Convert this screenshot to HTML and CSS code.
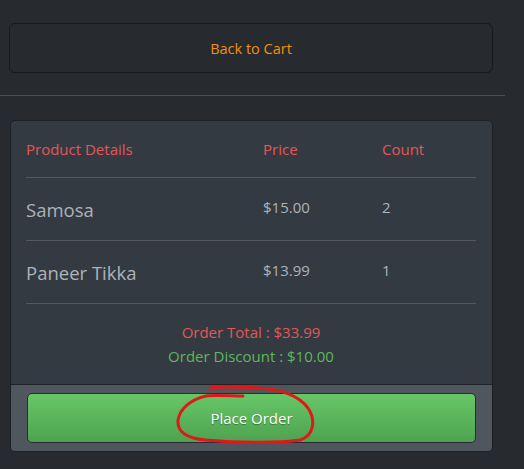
FILE: index.html
```html
<!DOCTYPE html>
<html>
<head>
<meta charset="utf-8">
<link rel="stylesheet" href="styles.css">
</head>
<body>
<div class="page">
  <div class="top">
    <button class="back-btn">Back to Cart</button>
  </div>
  <hr class="divider">
  <div class="card">
    <div class="card-body">
      <table class="cart">
        <thead>
          <tr><th class="c-name">Product Details</th><th class="c-price">Price</th><th class="c-count">Count</th></tr>
        </thead>
        <tbody>
          <tr><td class="c-name name">Samosa</td><td class="c-price">$15.00</td><td class="c-count">2</td></tr>
          <tr><td class="c-name name">Paneer Tikka</td><td class="c-price">$13.99</td><td class="c-count">1</td></tr>
        </tbody>
      </table>
      <div class="totals">
        <div class="total">Order Total : $33.99</div>
        <div class="discount">Order Discount : $10.00</div>
      </div>
    </div>
    <div class="card-footer">
      <button class="place-btn">Place Order</button>
    </div>
  </div>
</div>
<svg class="scribble" width="524" height="469" viewBox="0 0 524 469">
  <path d="M243 396 C232 396 215 395 206 396 C192 399 180 408 178 420 C177 432 186 438 205 440 C240 443 280 443 300 440 C314 436 316 420 308 408 C298 395 280 389 258 388 C240 387 222 386 210 388" fill="none" stroke="#e01818" stroke-width="3" stroke-linecap="round"/>
</svg>
</body>
</html>
```
FILE: styles.css
```css
html, body {
  margin: 0;
  padding: 0;
  background: #272a2f;
  font-family: "Open Sans", "Noto Sans", sans-serif;
}
.page {
  width: 505px;
  padding-top: 23px;
}
.top {
  padding: 0 12px 0 9px;
}
.back-btn {
  display: block;
  width: 100%;
  height: 50px;
  background: #272a2f;
  border: 1px solid #16181b;
  border-radius: 6px;
  color: #f0900c;
  font-family: inherit;
  font-size: 14.5px;
}
.divider {
  margin: 22px 0 24px;
  border: 0;
  border-top: 1px solid #4a4d53;
  height: 0;
}
.card {
  margin-left: 10px;
  width: 481px;
  background: #343a41;
  border: 1px solid #1c1f23;
  border-radius: 5px;
  overflow: hidden;
}
.card-body {
  padding: 0 16px 0 15px;
}
.cart {
  width: 100%;
  border-collapse: collapse;
}
.cart th {
  height: 56px;
  text-align: left;
  font-weight: normal;
  color: #e45656;
  font-size: 15px;
  padding: 0;
  vertical-align: middle;
  border-bottom: 1px solid #55595e;
}
.cart td {
  height: 62px;
  padding: 0;
  color: #adb3ba;
  font-size: 15px;
  vertical-align: middle;
  border-bottom: 1px solid #55595e;
}
.cart td.name {
  font-size: 18.5px;
}
.cart td.c-price, .cart td.c-count {
  height: 57px;
  padding-bottom: 5px;
}
.c-name { width: 237px; }
.c-price { width: 119px; }
.totals {
  text-align: center;
  font-size: 15px;
  line-height: 24px;
  padding: 16px 0 16px;
}
.total { color: #e45656; }
.discount { color: #5cb85c; }
.card-footer {
  background: #4f565e;
  border-top: 1px solid #1f2226;
  padding: 8px 16px 8px;
}
.place-btn {
  display: block;
  width: 100%;
  height: 50px;
  border: 1px solid #2a2e32;
  border-radius: 5px;
  background: linear-gradient(#67c767, #4fa250);
  color: #ffffff;
  font-family: inherit;
  font-size: 15px;
  text-shadow: 0 1px 1px rgba(0,0,0,0.35);
}
.scribble {
  position: absolute;
  left: 0;
  top: 0;
  pointer-events: none;
}
```
